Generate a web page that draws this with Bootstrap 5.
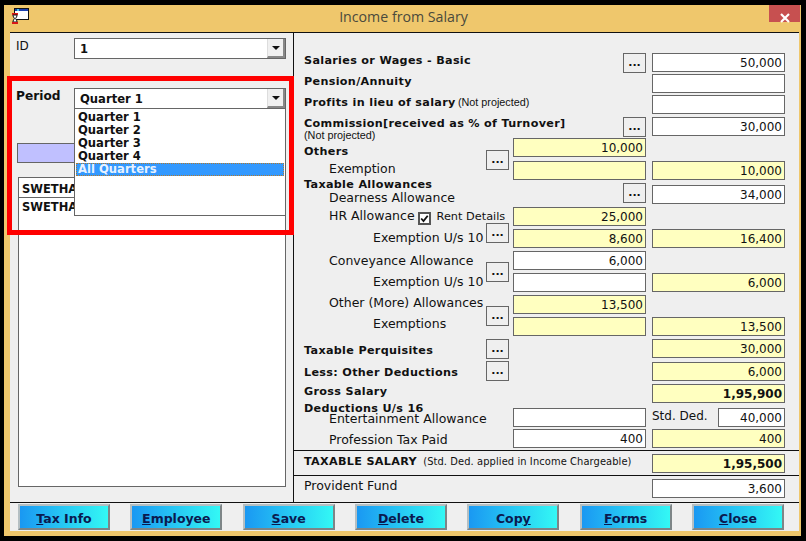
<!DOCTYPE html>
<html lang="en">
<head>
<meta charset="utf-8">
<title>Income from Salary</title>
<link rel="stylesheet" href="https://cdn.jsdelivr.net/npm/bootstrap@5.3.0/dist/css/bootstrap.min.css">
<style>
html,body{height:100%;background:#000;overflow:hidden}
body{font-family:"DejaVu Sans",sans-serif;font-size:12.5px;line-height:14px;color:#111}
.app-win{width:797px;height:531px;margin:5px 0 0 4px;background:#efc76c;position:relative}
.title-bar{height:27px;position:relative}
.title-text{font-family:"Open Sans",sans-serif;font-size:14.2px;line-height:24px;color:#4a4a3c;width:100%;text-align:center;padding-left:2px}
.app-ico{position:absolute;left:8px;top:3px}
.close-x{position:absolute;right:1px;top:0;width:31px;height:17px;background:#c75050;border:0;border-radius:0;padding:0}
.inner{margin:0 2px 0 6px;height:499px;background:#efefef;border-top:1px solid #111}
.main-area{height:469px}
.left-pane{width:284px;border-right:1px solid #111;padding-left:6px}
.right-pane{width:505px}
.combo{width:212px;height:21px;margin-left:58px;background:#fff;border:1px solid #666;font-weight:700;padding:1px 0 0 5px;line-height:19px;position:relative;font-size:11.6px}
.combo-arrow{position:absolute;right:0;top:0;width:18px;height:19px;background:#f0f0f0;border-right:2px solid #888;border-bottom:2px solid #888;border-left:1px solid #ddd;display:flex;align-items:center;justify-content:center}
.combo-arrow i{display:block;border:4px solid transparent;border-top:4px solid #111;border-bottom:0}
.lab-left{position:absolute;left:0;width:58px}
.row-id{margin-top:5px;position:relative}
.row-id .lab-left{top:1px;font-size:12px}
.row-period{margin-top:29px;position:relative}
.row-period .lab-left{top:1px;font-weight:700;font-size:12.2px}
.drop-list{position:absolute;left:-1px;top:19px;width:212px;height:108px;background:#fff;border:1px solid #666;z-index:3;padding:2px 1px;font-size:11.6px;line-height:13px;list-style:none;margin:0}
.drop-list li{padding-left:2px;height:13px}
.drop-list li.sel{background:#3399ff;color:#e8f2ff;outline:1px dotted #b07a30;outline-offset:-1px}
.lav-bar{height:20px;width:269px;margin:34px 0 0 1px;background:#c0c0ff;border:1px solid #666}
.emp-list{width:268px;height:310px;margin:14px 0 0 2px;background:#fff;border:1px solid #666;font-weight:700;font-size:11.5px}
.emp-list div{height:20px;padding:4px 0 0 3px;overflow:hidden;white-space:nowrap}
.emp-list div:first-child{border-bottom:1px solid #666}
.emp-list div+div{padding-top:2px}
.red-box{position:absolute;left:3px;top:71px;width:287px;height:159px;border:5px solid #f00;z-index:5;pointer-events:none}
.sal-grid{display:grid;margin:20px 0 0 10px;grid-template-columns:182px 23px 137px 139px;column-gap:0;grid-template-rows:21px 21px 22px 21px 23px 24px 22px 22px 22px 22px 22px 22px 22px 23px 22px 24px 21px 21px}
.c-lab{grid-column:1/3;white-space:nowrap;margin-top:1px}
.c-top{margin-top:0}
.c-dot{grid-column:2}
.c-mid{grid-column:3;margin-left:4px;width:133px}
.c-right{grid-column:4;margin-left:6px;width:133px}
.c-dot2{grid-column:3;justify-self:end}
.cell{display:block;height:19px;min-height:0;padding:0 2px 0 0;border:1px solid #666;border-radius:0;background:#fff;text-align:right;font-size:12px;line-height:18px;color:#111;align-self:start}
.cell.yel{background:#ffffc0}
.dots{width:23px;height:20px;padding:0;border:1px solid #666;border-radius:0;background:#efefef;font-weight:700;font-size:11px;line-height:14px;color:#111;align-self:start}
.dm11{margin-top:11px}
.dm12{margin-top:12px}
.b-lab{font-weight:700;font-size:11.2px;letter-spacing:.32px}
.note{font-family:"Liberation Sans",sans-serif;font-size:10.8px;font-weight:400;letter-spacing:0;margin-left:-2px}
.note-sm{display:block;line-height:10px;margin:-1px 0 0}
.note-std{font-family:"DejaVu Sans",sans-serif;font-size:9.9px;font-weight:400;margin-left:2px;letter-spacing:.1px}
.ind1{padding-left:25px}
.ind2{padding-left:69px}
.o1{padding-top:1px}.o2{padding-top:2px}.o3{padding-top:3px}.o4{padding-top:4px}.o5{padding-top:5px}.o6{padding-top:6px}
.gap3{margin-top:3px}
.tax-head{margin-top:2px}
.hr-chk{display:inline-block;width:13px;height:13px;vertical-align:-2px;margin:0 6px 0 3px}
.rent{font-size:11.3px}
.std-wrap{grid-column:4;margin-left:6px;display:flex;justify-content:space-between;width:133px;align-items:flex-start}
.std-wrap .cell{width:67px}
.std-lab{padding-top:1px;font-size:12px}
.r1{grid-row:1}.r2{grid-row:2}.r3{grid-row:3}.r4{grid-row:4}.r5{grid-row:5}.r6{grid-row:6}.r7{grid-row:7}.r8{grid-row:8}.r9{grid-row:9}.r10{grid-row:10}.r11{grid-row:11}.r12{grid-row:12}.r13{grid-row:13}.r14{grid-row:14}.r15{grid-row:15}.r16{grid-row:16}.r17{grid-row:17}.r18{grid-row:18}
.r5s{grid-row:5/7}.r8s{grid-row:8/10}.r10s{grid-row:10/12}.r12s{grid-row:12/14}
.up2{margin-top:-2px}.up1{margin-top:-1px}
.hr-dot{margin-top:16px}
.bar-row{border-top:1px solid #111;margin:0;padding:0 14px 0 10px;display:flex;justify-content:space-between}
.bar-tax{height:25px;padding-top:3px}
.bar-tax>span{padding-top:1px}
.bar-pf{height:26px;padding-top:3px}
.w-cell{width:133px}
.foot{height:29px;border-top:1px solid #111;padding:1px 15px 0 8px;display:flex;justify-content:space-between}
.act-btn{width:92px;height:26px;padding:4px 0 0;border:2px solid;border-color:#b5bfc2 #7d8587 #7d8587 #b5bfc2;border-radius:0;background:linear-gradient(90deg,#1a98f2,#33f8f5);font-weight:700;font-size:12.5px;line-height:18px;color:#0a1a50}
.act-btn:hover{background:linear-gradient(90deg,#1a98f2,#33f8f5);color:#0a1a50;border-color:#b5bfc2 #7d8587 #7d8587 #b5bfc2}
</style>
</head>
<body>
<div class="app-win">
  <div class="title-bar">
    <svg class="app-ico" width="17" height="17" viewBox="0 0 17 17" aria-hidden="true">
      <rect x="2.5" y="0.5" width="14" height="11" fill="#fff" stroke="#111"/>
      <rect x="3" y="1" width="13" height="2" fill="#1a3fb0"/>
      <rect x="5" y="1" width="2" height="2" fill="#3fc8e8"/>
      <rect x="0" y="5" width="6" height="2" fill="#d81818"/>
      <path d="M1 7h4v1L3.6 10.5 5 13v1H1v-1l1.4-2.5L1 8z" fill="#fff" stroke="#111" stroke-width="1"/>
      <rect x="0" y="14" width="6" height="2" fill="#d81818"/>
    </svg>
    <div class="title-text">Income from Salary</div>
    <button class="btn close-x" type="button" aria-label="Close">
      <svg width="12" height="10" viewBox="0 0 12 10" aria-hidden="true"><path d="M2 1l8 8M10 1L2 9" stroke="#fff" stroke-width="2.2"/></svg>
    </button>
  </div>
  <div class="inner">
    <div class="d-flex main-area">
      <div class="left-pane">
        <div class="row-id">
          <span class="lab-left">ID</span>
          <div class="combo">1<span class="combo-arrow"><i></i></span></div>
        </div>
        <div class="row-period">
          <span class="lab-left">Period</span>
          <div class="combo">Quarter 1<span class="combo-arrow"><i></i></span>
            <ul class="drop-list">
              <li>Quarter 1</li>
              <li>Quarter 2</li>
              <li>Quarter 3</li>
              <li>Quarter 4</li>
              <li class="sel">All Quarters</li>
            </ul>
          </div>
        </div>
        <div class="lav-bar"></div>
        <div class="emp-list">
          <div>SWETHA</div>
          <div>SWETHA</div>
        </div>
      </div>
      <div class="right-pane d-flex flex-column">
        <div class="sal-grid">
          <div class="c-lab b-lab r1">Salaries or Wages - Basic</div>
          <button class="btn dots c-dot2 r1" type="button">...</button>
          <div class="cell c-right r1">50,000</div>

          <div class="c-lab b-lab r2">Pension/Annuity</div>
          <div class="cell c-right r2"></div>

          <div class="c-lab c-top b-lab r3">Profits in lieu of salary <span class="note">(Not projected)</span></div>
          <div class="cell c-right r3"></div>

          <div class="c-lab c-top b-lab r4">Commission[received as % of Turnover]<span class="note note-sm">(Not projected)</span></div>
          <button class="btn dots c-dot2 r4" type="button">...</button>
          <div class="cell c-right r4">30,000</div>

          <div class="c-lab b-lab r5 o6">Others</div>
          <button class="btn dots dm12 c-dot r5s" type="button">...</button>
          <div class="cell yel c-mid r5">10,000</div>

          <div class="c-lab r6"><div class="ind1">Exemption</div><div class="b-lab tax-head">Taxable Allowances</div></div>
          <div class="cell yel c-mid r6"></div>
          <div class="cell yel c-right r6">10,000</div>

          <div class="c-lab ind1 r7 o5">Dearness Allowance</div>
          <button class="btn dots c-dot2 r7 up2" type="button">...</button>
          <div class="cell c-right r7">34,000</div>

          <div class="c-lab ind1 r8 o1">HR Allowance<span class="hr-chk"><svg width="13" height="13" viewBox="0 0 13 13" aria-hidden="true"><rect x="1" y="1" width="11" height="11" fill="#fff" stroke="#555" stroke-width="2"/><path d="M3.2 6.5l2.3 2.6 4.2-5.4" fill="none" stroke="#111" stroke-width="1.8"/></svg></span><span class="rent">Rent Details</span></div>
          <div class="cell yel c-mid r8">25,000</div>

          <div class="c-lab ind2 r9 o1">Exemption U/s 10</div>
          <button class="btn dots hr-dot c-dot r8s" type="button">...</button>
          <div class="cell yel c-mid r9">8,600</div>
          <div class="cell yel c-right r9">16,400</div>

          <div class="c-lab ind1 r10 o2">Conveyance Allowance</div>
          <button class="btn dots dm11 c-dot r10s" type="button">...</button>
          <div class="cell c-mid r10">6,000</div>

          <div class="c-lab ind2 r11 o1">Exemption U/s 10</div>
          <div class="cell c-mid r11"></div>
          <div class="cell yel c-right r11">6,000</div>

          <div class="c-lab ind1 r12">Other (More) Allowances</div>
          <button class="btn dots dm11 c-dot r12s" type="button">...</button>
          <div class="cell yel c-mid r12">13,500</div>

          <div class="c-lab c-top ind2 r13">Exemptions</div>
          <div class="cell yel c-mid r13"></div>
          <div class="cell yel c-right r13">13,500</div>

          <div class="c-lab b-lab r14 o4">Taxable Perquisites</div>
          <button class="btn dots c-dot r14" type="button">...</button>
          <div class="cell yel c-right r14">30,000</div>

          <div class="c-lab b-lab r15 o3">Less: Other Deductions</div>
          <button class="btn dots c-dot r15 up1" type="button">...</button>
          <div class="cell yel c-right r15">6,000</div>

          <div class="c-lab b-lab r16">Gross Salary<div class="gap3">Deductions U/s 16</div></div>
          <div class="cell yel fw-bold c-right r16">1,95,900</div>

          <div class="c-lab ind1 r17 o3">Entertainment Allowance</div>
          <div class="cell c-mid r17"></div>
          <div class="std-wrap r17"><span class="std-lab">Std. Ded.</span><div class="cell">40,000</div></div>

          <div class="c-lab ind1 r18 o3">Profession Tax Paid</div>
          <div class="cell c-mid r18">400</div>
          <div class="cell yel c-right r18">400</div>
        </div>
        <div class="bar-row bar-tax">
          <span class="b-lab">TAXABLE SALARY <span class="note-std">(Std. Ded. applied in Income Chargeable)</span></span>
          <div class="cell yel fw-bold w-cell">1,95,500</div>
        </div>
        <div class="bar-row bar-pf">
          <span>Provident Fund</span>
          <div class="cell w-cell">3,600</div>
        </div>
      </div>
    </div>
    <div class="foot">
      <button class="btn act-btn" type="button"><u>T</u>ax Info</button>
      <button class="btn act-btn" type="button"><u>E</u>mployee</button>
      <button class="btn act-btn" type="button"><u>S</u>ave</button>
      <button class="btn act-btn" type="button"><u>D</u>elete</button>
      <button class="btn act-btn" type="button">Cop<u>y</u></button>
      <button class="btn act-btn" type="button"><u>F</u>orms</button>
      <button class="btn act-btn" type="button"><u>C</u>lose</button>
    </div>
  </div>
  <div class="red-box"></div>
</div>
<script src="https://cdn.jsdelivr.net/npm/bootstrap@5.3.0/dist/js/bootstrap.bundle.min.js"></script>
</body>
</html>
